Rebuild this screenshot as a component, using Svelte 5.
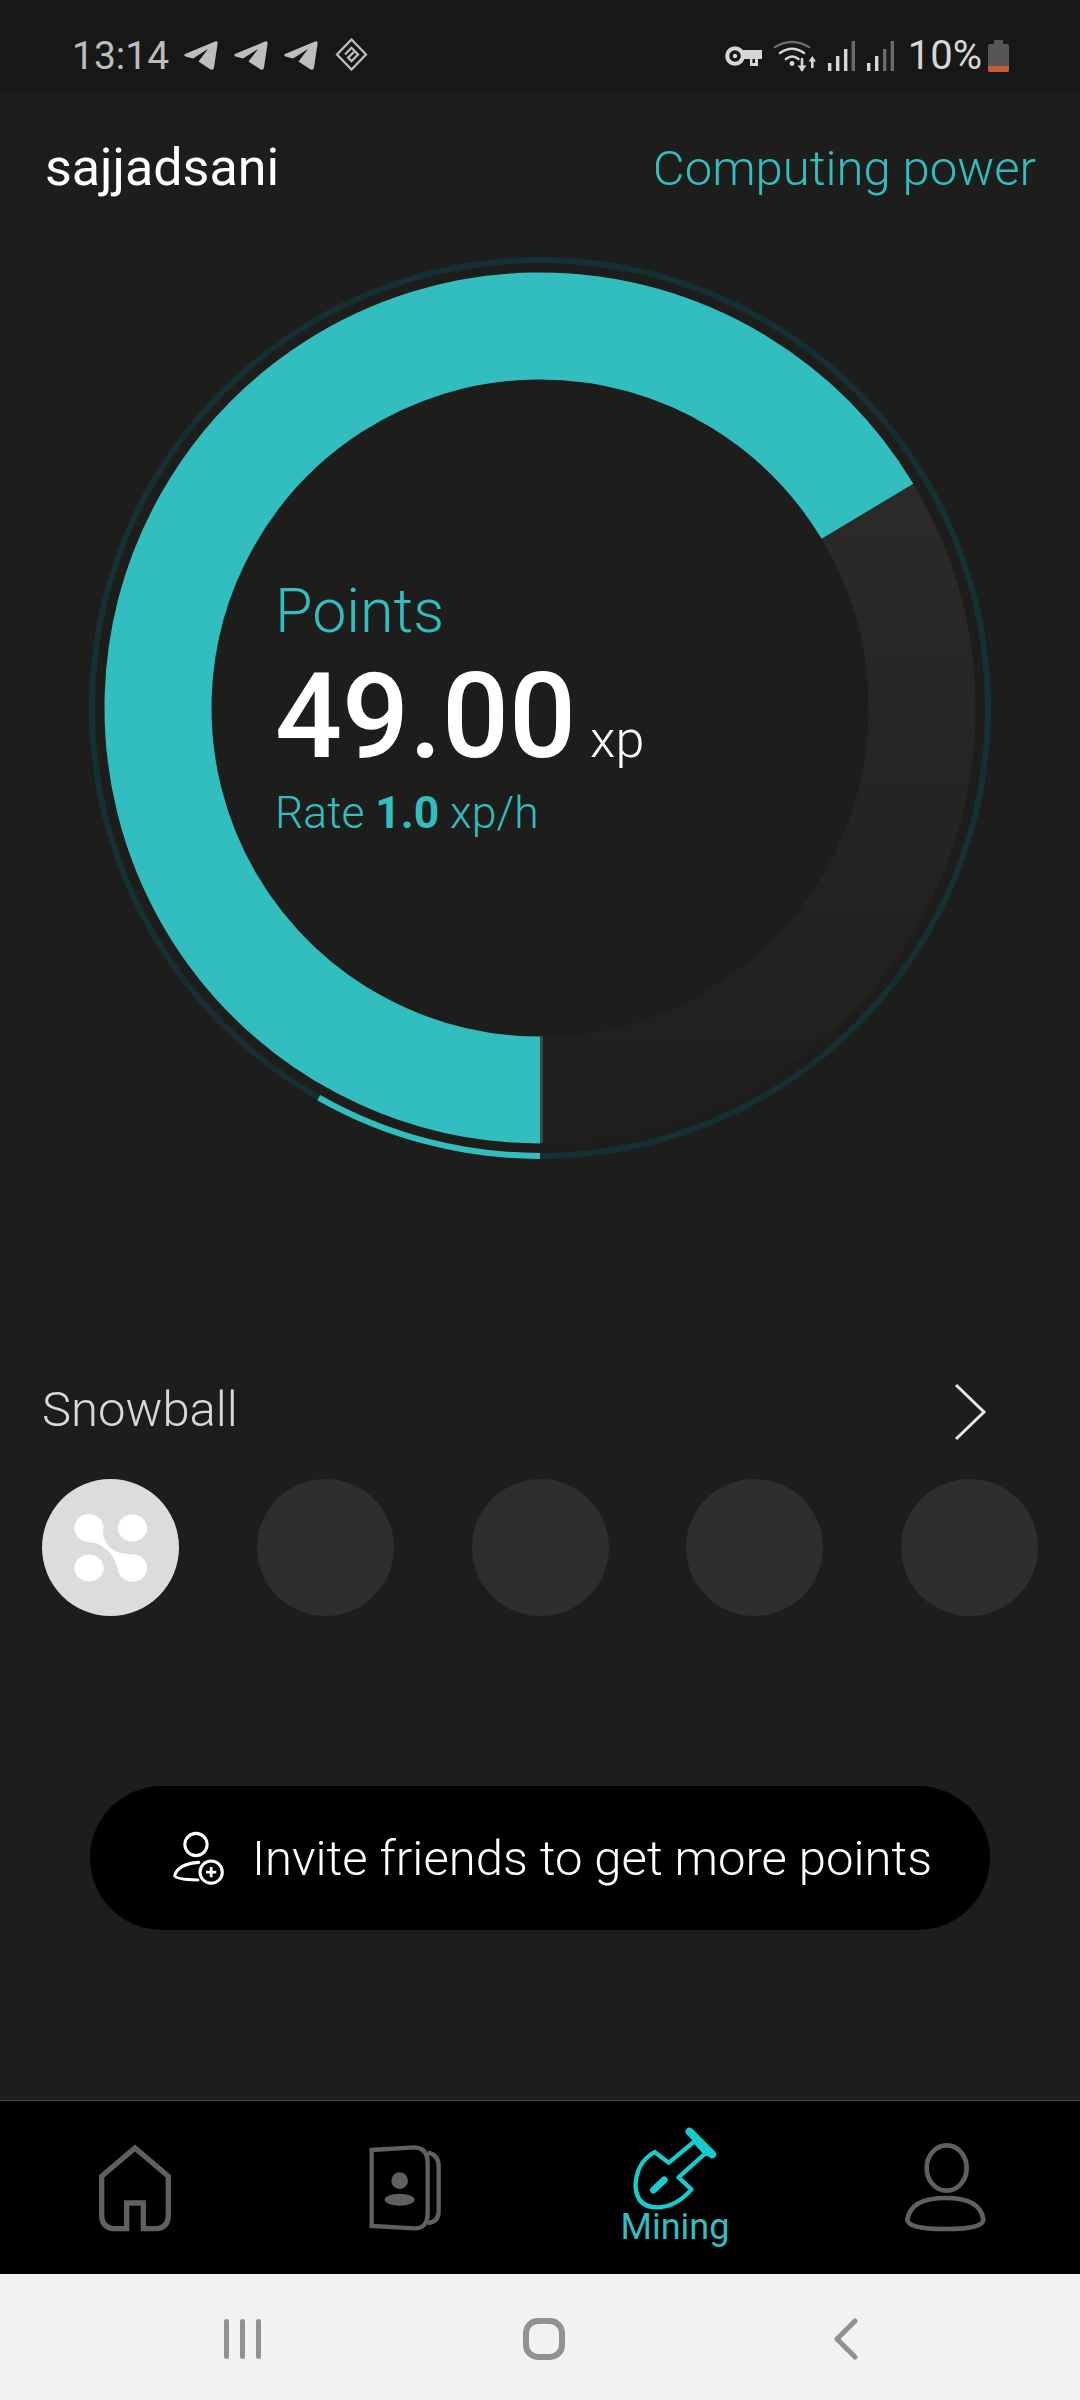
<script>
  const cx = 540, cy = 458;
  const pt = (r, deg) => {
    const a = (deg * Math.PI) / 180;
    return `${(cx + r * Math.sin(a)).toFixed(2)} ${(cy - r * Math.cos(a)).toFixed(2)}`;
  };
  const arc = (r, from, to) => {
    const large = to - from > 180 ? 1 : 0;
    return `M${pt(r, from)} A${r} ${r} 0 ${large} 1 ${pt(r, to)}`;
  };
  const dots = [0, 1, 2, 3];
  const plane = 'M1 14 L31 1.6 Q34 .6 33.6 3.6 L30 27.5 Q29.4 30.6 26.6 29.4 L14.5 21.5 L24 9 L9 18.5 L1.5 16.5 Q-.8 15 1 14Z';
  const signals = [3, 2];
  const barX = [0, 8, 16, 23.6];
  const barH = [8, 15, 22, 30];
</script>

<div class="screen">
  <div class="status">
    <div class="left">
      <span class="time">13:14</span>
      <div class="planes">
        {#each [0, 1, 2] as i (i)}
          <svg width="34" height="31" viewBox="0 0 34 31"><path d={plane} fill="#bdbdbd" /></svg>
        {/each}
      </div>
      <svg class="diamond" width="33" height="33" viewBox="0 0 32 33" fill="none" stroke="#bdbdbd" stroke-width="2.3">
        <path d="M16 1.5 L30.5 16.5 L16 31.5 L1.5 16.5Z" />
        <path d="M9.5 16.5 L16 9.8 L22.5 16.5 L16 23.2 L12.6 19.6 L18.4 14" />
      </svg>
    </div>
    <div class="right">
      <svg width="37" height="22" viewBox="0 0 37 22" fill="none">
        <circle cx="10" cy="11" r="7.8" stroke="#d6d6d6" stroke-width="4" />
        <circle cx="10" cy="11" r="2.2" fill="#d6d6d6" />
        <path d="M17 5 H37 V14 H33 V21 H25 V14 H17Z" fill="#d6d6d6" />
        <path d="M27.5 14 V18 H30 V14Z" fill="#161716" />
      </svg>
      <svg class="wifi" width="42" height="32" viewBox="0 0 42 32" fill="none" stroke-linecap="round">
        <path d="M1 7 Q18 -3 35 7" stroke="#6a6a6a" stroke-width="2.6" />
        <path d="M6 13 Q18 4.5 30 13" stroke="#d6d6d6" stroke-width="2.6" />
        <path d="M12 19 Q18 14 24.5 19" stroke="#d6d6d6" stroke-width="2.6" />
        <circle cx="18" cy="23.5" r="2.4" fill="#d6d6d6" />
        <path d="M28 19 V30" stroke="#d6d6d6" stroke-width="2.6" />
        <path d="M23.5 25.5 H32.5 L28 31.5Z" fill="#d6d6d6" />
        <path d="M38.3 27 V19" stroke="#d6d6d6" stroke-width="2.6" />
        <path d="M34.5 21.5 H42 L38.3 16Z" fill="#d6d6d6" />
      </svg>
      <div class="signals">
        {#each signals as lit, s (s)}
          <svg width="27" height="30" viewBox="0 0 27 30">
            {#each barX as x, b (b)}
              <rect {x} y={30 - barH[b]} width="3.4" height={barH[b]} fill={b < lit ? '#d6d6d6' : '#6a6a6a'} />
            {/each}
          </svg>
        {/each}
      </div>
      <span class="pct">10%</span>
      <svg width="21" height="32" viewBox="0 0 21 32">
        <path d="M6 0 H15 V4 H19 Q21 4 21 6 V30 Q21 32 19 32 H2 Q0 32 0 30 V6 Q0 4 2 4 H6Z" fill="#555554" />
        <path d="M0 26 H21 V30 Q21 32 19 32 H2 Q0 32 0 30Z" fill="#c95a38" />
      </svg>
    </div>
  </div>

  <div class="top">
    <span class="user">sajjadsani</span>
    <span class="power">Computing power</span>
  </div>

  <div class="gauge">
    <svg width="1080" height="930" viewBox="0 0 1080 930" fill="none">
      <defs>
        <linearGradient id="track" gradientUnits="userSpaceOnUse" x1="0" y1="200" x2="0" y2="900">
          <stop offset="0" stop-color="#2c2b2a" />
          <stop offset="1" stop-color="#1e1e1d" />
        </linearGradient>
      </defs>
      <circle cx={cx} cy={cy} r="448" stroke="#143033" stroke-width="6" />
      <path d={arc(382, 59, 180)} stroke="url(#track)" stroke-width="107" />
      <path d={arc(382, 180, 419)} stroke="#32bebf" stroke-width="107" />
      <path d={arc(448, 180, 209.6)} stroke="#32bebf" stroke-width="6" />
      <rect x="540" y={cy + 328} width="3" height="107" fill="#3c4a4a" />
    </svg>
    <div class="readout">
      <div class="label">Points</div>
      <div class="value"><strong>49.00</strong><span>xp</span></div>
      <div class="rate">Rate <b>1.0</b> xp/h</div>
    </div>
  </div>

  <div class="snow-head">
    <span>Snowball</span>
    <svg class="chev" width="34" height="60" viewBox="0 0 34 60" fill="none" stroke="#e8e8e8" stroke-width="3">
      <path d="M3 3 L31 30 L3 57" />
    </svg>
  </div>
  <div class="dots">
    <div class="dot on">
      <svg width="74" height="72" viewBox="-37 -36 74 72" fill="#fff">
        <ellipse cx="-22" cy="-20" rx="14.6" ry="13.8" />
        <ellipse cx="21.5" cy="-20" rx="14.6" ry="13.4" />
        <ellipse cx="-22" cy="20" rx="14.6" ry="13.6" />
        <ellipse cx="21.5" cy="20" rx="14.6" ry="13.8" />
        <path d="M-8 -17 C-8 -6 0 5.5 17 6 L6 20 C5 8 -8 -6.5 -25 -6.5Z" />
      </svg>
    </div>
    {#each dots as d (d)}
      <div class="dot"></div>
    {/each}
  </div>

  <div class="invite">
    <svg width="54" height="54" viewBox="270 190 160 160" fill="none" stroke="#fff" stroke-width="9">
      <circle cx="344" cy="230" r="33" />
      <path d="M352 283 Q290 288 281 322 Q284 333 350 335" stroke-linecap="round" />
      <circle cx="389" cy="312" r="33" />
      <path d="M389 297 V327 M374 312 H404" stroke-width="8" />
    </svg>
    <span>Invite friends to get more points</span>
  </div>

  <div class="spacer"></div>

  <nav class="tabs">
    <div class="tab">
      <svg width="78" height="90" viewBox="110 180 234 270" fill="none" stroke="#606060" stroke-width="16">
        <path d="M227 195 L327 280 V395 Q327 437 285 437 H252 V360 H202 V437 H170 Q127 437 127 395 V280Z" />
      </svg>
    </div>
    <div class="tab">
      <svg width="78" height="90" viewBox="920 180 234 270" fill="none" stroke="#606060" stroke-width="13">
        <path d="M937 201 L1065 193 Q1105 195 1105 240 V390 Q1105 437 1065 436 L937 429Z" />
        <path d="M1105 209 Q1138 215 1138 250 V385 Q1138 418 1105 420" />
        <circle cx="1021" cy="293" r="25" fill="#606060" stroke="none" />
        <ellipse cx="1021" cy="350" rx="45" ry="18" fill="#606060" stroke="none" />
      </svg>
    </div>
    <div class="tab active">
      <svg width="87" height="85" viewBox="218 130 260 255" fill="none" stroke="#16cccd" stroke-width="13" stroke-linejoin="round" stroke-linecap="round">
        <path d="M328 240 L410 172 L442 208 L357 284 L396 320 Q350 372 296 374 Q232 376 228 310 Q230 240 285 208Z" />
        <path d="M390 147 L458 215" stroke-width="24" />
        <path d="M410 172 L442 208" stroke-width="24" />
        <path d="M282 322 L314 292" stroke-width="21" />
      </svg>
      <span>Mining</span>
    </div>
    <div class="tab">
      <svg width="82" height="90" viewBox="1030 180 246 270" fill="none" stroke="#606060" stroke-width="14">
        <ellipse cx="1158" cy="255" rx="60" ry="68" />
        <path d="M1040 410 Q1050 345 1155 345 Q1260 345 1268 410 Q1268 438 1155 438 Q1040 438 1040 410Z" />
      </svg>
    </div>
  </nav>

  <div class="sys">
    <svg width="40" height="40" viewBox="0 0 40 40" fill="#919191">
      <rect x="2" y="0" width="5" height="40" rx="2.5" />
      <rect x="18" y="0" width="5" height="40" rx="2.5" />
      <rect x="34" y="0" width="5" height="40" rx="2.5" />
    </svg>
    <svg width="42" height="42" viewBox="0 0 42 42" fill="none" stroke="#919191" stroke-width="6">
      <rect x="3" y="3" width="36" height="36" rx="12" />
    </svg>
    <svg width="26" height="42" viewBox="0 0 26 42" fill="none" stroke="#919191" stroke-width="5" stroke-linecap="round" stroke-linejoin="round">
      <path d="M22 3 L4 21 L22 39" />
    </svg>
  </div>
</div>

<style>
  :global(body) {
    margin: 0;
    background: #1d1d1c;
  }
  .screen {
    width: 1080px;
    height: 2400px;
    display: flex;
    flex-direction: column;
    background: #1d1d1c;
    font-family: Roboto, "Liberation Sans", sans-serif;
    overflow: hidden;
  }
  .status {
    height: 91px;
    flex: none;
    background: #161716;
    display: flex;
    justify-content: space-between;
    align-items: center;
    padding: 20px 71px 0 72px;
    box-sizing: border-box;
  }
  .left, .right, .planes, .signals {
    display: flex;
    align-items: center;
  }
  .time {
    font-size: 39px;
    color: #bcbcbc;
    width: 112px;
  }
  .planes { gap: 16px; }
  .diamond { margin-left: 17px; margin-top: -2px; }
  .right { gap: 12px; }
  .signals { gap: 12px; }
  .pct {
    font-size: 40px;
    color: #d6d6d6;
    margin-left: 2px;
    margin-right: -6px;
  }
  .top {
    display: flex;
    justify-content: space-between;
    align-items: baseline;
    padding: 46px 44px 0 45px;
    height: 76px;
    flex: none;
  }
  .user {
    color: #fff;
    font-size: 52px;
  }
  .power {
    color: #32bebf;
    font-size: 49px;
    font-weight: 300;
  }
  .gauge {
    display: grid;
    flex: none;
    height: 1127px;
    align-items: start;
    margin-top: 37px;
  }
  .gauge > * { grid-area: 1 / 1; }
  .readout {
    padding: 326px 0 0 275px;
    color: #32bebf;
  }
  .label {
    font-size: 61px;
    font-weight: 300;
    line-height: 70px;
  }
  .value {
    display: flex;
    align-items: baseline;
    color: #fff;
    line-height: 116px;
    margin-top: 13px;
  }
  .value strong {
    font-size: 118px;
    font-weight: 500;
  }
  .value span {
    font-size: 52px;
    font-weight: 300;
    margin-left: 14px;
  }
  .rate {
    font-size: 44.5px;
    font-weight: 300;
    line-height: 50px;
    margin-top: -10px;
  }
  .rate b { font-weight: 700; }
  .snow-head {
    display: flex;
    justify-content: space-between;
    align-items: center;
    padding: 0 93px 0 42px;
    height: 64px;
    color: #d8d8d8;
    font-size: 49px;
    font-weight: 300;
    flex: none;
  }
  .chev { margin-top: 6px; }
  .dots {
    display: flex;
    justify-content: space-between;
    align-items: center;
    padding: 0 42px;
    margin-top: 38px;
    flex: none;
  }
  .dot {
    width: 137px;
    height: 137px;
    border-radius: 50%;
    background: #2e2e2d;
    display: flex;
    align-items: center;
    justify-content: center;
  }
  .dot.on { background: #dcdcdc; }
  .invite {
    margin: 170px 90px 0;
    height: 144px;
    flex: none;
    border-radius: 72px;
    background: #000;
    color: #fff;
    font-size: 49px;
    font-weight: 300;
    display: flex;
    align-items: center;
    gap: 27px;
    padding-left: 81px;
    box-sizing: border-box;
  }
  .spacer { flex: 1; }
  .tabs {
    height: 174px;
    flex: none;
    background: #000;
    border-top: 1px solid #444;
    display: grid;
    grid-template-columns: repeat(4, 1fr);
    box-sizing: border-box;
  }
  .tab {
    display: flex;
    flex-direction: column;
    align-items: center;
    justify-content: center;
  }
  .tab span {
    color: #32bebf;
    font-size: 36px;
    line-height: 40px;
    margin-top: -4px;
  }
  .active { justify-content: flex-start; padding-top: 25px; }
  .sys {
    height: 126px;
    flex: none;
    background: #f2f2f2;
    display: grid;
    grid-template-columns: repeat(3, 302px);
    justify-content: center;
    align-items: center;
    justify-items: center;
    padding: 3px 0 0 8px;
    box-sizing: border-box;
  }
</style>
